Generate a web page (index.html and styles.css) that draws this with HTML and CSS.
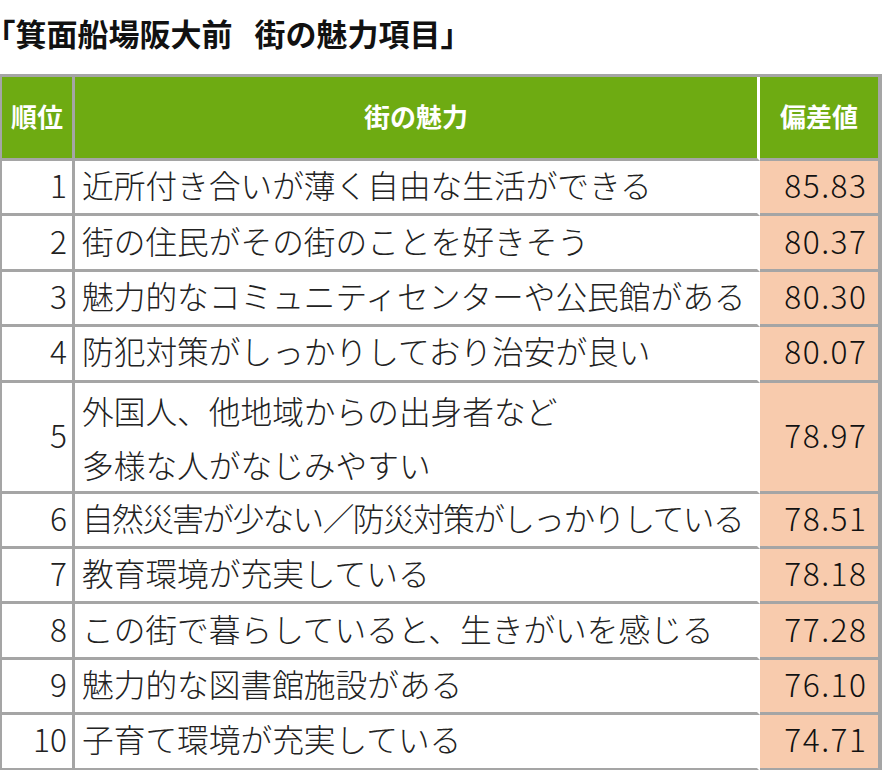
FILE: index.html
```html
<!DOCTYPE html>
<html lang="ja">
<head>
<meta charset="utf-8">
<title>箕面船場阪大前 街の魅力項目</title>
<link rel="stylesheet" href="styles.css">
</head>
<body>
<h1 class="title"><span class="br-open">「</span>箕面船場阪大前 街の魅力項目」</h1>
<table class="rank-table">
  <thead>
    <tr>
      <th class="c-rank">順位</th>
      <th class="c-text">街の魅力</th>
      <th class="c-val">偏差値</th>
    </tr>
  </thead>
  <tbody>
    <tr><td class="c-rank">1</td><td class="c-text">近所付き合いが薄く自由な生活ができる</td><td class="c-val">85.83</td></tr>
    <tr><td class="c-rank">2</td><td class="c-text">街の住民がその街のことを好きそう</td><td class="c-val">80.37</td></tr>
    <tr><td class="c-rank">3</td><td class="c-text">魅力的なコミュニティセンターや公民館がある</td><td class="c-val">80.30</td></tr>
    <tr><td class="c-rank">4</td><td class="c-text">防犯対策がしっかりしており治安が良い</td><td class="c-val">80.07</td></tr>
    <tr class="tall"><td class="c-rank">5</td><td class="c-text">外国人、他地域からの出身者など<br>多様な人がなじみやすい</td><td class="c-val">78.97</td></tr>
    <tr><td class="c-rank">6</td><td class="c-text tight">自然災害が少ない／防災対策がしっかりしている</td><td class="c-val">78.51</td></tr>
    <tr><td class="c-rank">7</td><td class="c-text">教育環境が充実している</td><td class="c-val">78.18</td></tr>
    <tr><td class="c-rank">8</td><td class="c-text">この街で暮らしていると、生きがいを感じる</td><td class="c-val">77.28</td></tr>
    <tr><td class="c-rank">9</td><td class="c-text">魅力的な図書館施設がある</td><td class="c-val">76.10</td></tr>
    <tr><td class="c-rank">10</td><td class="c-text">子育て環境が充実している</td><td class="c-val">74.71</td></tr>
  </tbody>
</table>
</body>
</html>
```
FILE: styles.css
```css
html, body {
  margin: 0;
  padding: 0;
  background: #ffffff;
}

body {
  font-family: "Noto Sans CJK JP", "Noto Sans", sans-serif;
  color: #222222;
  width: 882px;
  height: 770px;
  overflow: hidden;
}

.title {
  box-sizing: border-box;
  height: 74px;
  margin: 0;
  padding-top: 17px;
  font-size: 31px;
  line-height: 31px;
  font-weight: 700;
  color: #111111;
  white-space: nowrap;
  word-spacing: 15px;
}

.br-open {
  font-feature-settings: "halt";
}

.rank-table {
  width: 882px;
  border-collapse: separate;
  border-spacing: 0;
  border-top: 3px solid #a5a5a5;
  border-left: 2px solid #a5a5a5;
  table-layout: fixed;
}

.rank-table th,
.rank-table td {
  padding: 0;
  border-bottom: 3px solid #a5a5a5;
  white-space: nowrap;
  vertical-align: middle;
}

.rank-table thead tr {
  height: 84px;
}

.rank-table th {
  background: #6eab12;
  color: #ffffff;
  font-size: 26px;
  font-weight: 700;
  text-align: center;
  line-height: 30px;
  padding-bottom: 4px;
}

.rank-table tbody tr {
  height: 55.4px;
}

.rank-table tbody tr.tall {
  height: 110.8px;
}

.rank-table td {
  font-size: 31.7px;
  line-height: 46px;
  padding-bottom: 6px;
  font-weight: 300;
}

.rank-table .tall td.c-text {
  line-height: 54px;
  padding-bottom: 0;
}

.c-rank {
  width: 70px;
  border-right: 3px solid #a5a5a5;
}

.c-text {
  width: 682px;
  border-right: 3px solid #ffffff;
}

.c-val {
  width: 118px;
  border-right: 4px solid #a5a5a5;
}

td.c-rank {
  text-align: right;
  padding-right: 5px;
}

td.c-text {
  text-align: left;
  padding-left: 7px;
}

td.c-text.tight {
  letter-spacing: -1.6px;
}

td.c-val {
  background: #f8cbad;
  text-align: right;
  padding-right: 10.5px;
  letter-spacing: 1.5px;
  color: #111111;
}
```
